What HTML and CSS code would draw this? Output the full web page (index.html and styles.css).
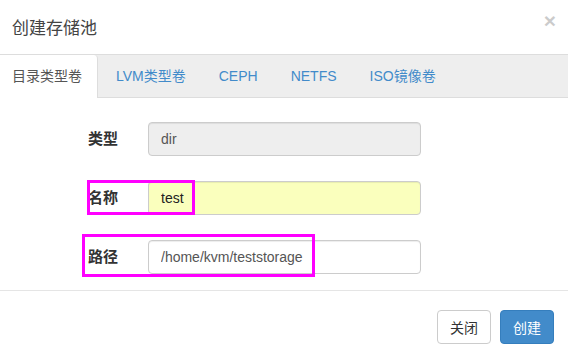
FILE: index.html
```html
<!DOCTYPE html>
<html lang="zh-CN">
<head>
    <meta charset="UTF-8">
    <title>创建存储池</title>
    <link rel="stylesheet" href="styles.css">
</head>
<body>
    <div class="modal">
        <div class="modal-header">
            <h4 class="modal-title">创建存储池</h4>
            <span class="close">&times;</span>
        </div>
        <ul class="nav-tabs">
            <li class="active"><a>目录类型卷</a></li>
            <li><a>LVM类型卷</a></li>
            <li><a>CEPH</a></li>
            <li><a>NETFS</a></li>
            <li><a>ISO镜像卷</a></li>
        </ul>
        <div class="modal-body">
            <div class="form-row">
                <label>类型</label>
                <input class="form-control" type="text" value="dir" disabled>
            </div>
            <div class="form-row">
                <label>名称</label>
                <input class="form-control filled" type="text" value="test">
                <span class="mark mark-name"></span>
            </div>
            <div class="form-row">
                <label>路径</label>
                <input class="form-control" type="text" value="/home/kvm/teststorage">
                <span class="mark mark-path"></span>
            </div>
        </div>
        <div class="modal-footer">
            <button class="btn btn-default">关闭</button>
            <button class="btn btn-primary">创建</button>
        </div>
    </div>
</body>
</html>
```

FILE: styles.css
```css
body, html {
    margin: 0;
    padding: 0;
    background: #fff;
    font-family: "Liberation Sans", Arial, "Noto Sans CJK SC", sans-serif;
    font-size: 14px;
    color: #333;
}

.modal {
    width: 568px;
    height: 361px;
    overflow: hidden;
}

.modal-header {
    display: flex;
    justify-content: space-between;
    align-items: center;
    height: 54px;
    padding: 0 12px 0 12px;
    box-sizing: border-box;
}

.modal-title {
    margin: 0;
    font-size: 17px;
    font-weight: normal;
    color: #444;
    position: relative;
    top: -1px;
}

.close {
    font-size: 21px;
    font-weight: bold;
    color: #000;
    opacity: 0.2;
    line-height: 1;
    position: relative;
    top: -7px;
}

.nav-tabs {
    list-style: none;
    margin: 0;
    padding: 0;
    display: flex;
    height: 42px;
    background: #eee;
    border-top: 1px solid #ddd;
    border-bottom: 1px solid #ddd;
}

.nav-tabs li {
    margin-right: 3px;
}

.nav-tabs li a {
    display: block;
    padding: 0 15px;
    line-height: 42px;
    color: #428bca;
    cursor: pointer;
}

.nav-tabs li:first-child a {
    padding-left: 12px;
}

.nav-tabs li.active {
    background: #fff;
    border-right: 1px solid #ddd;
    margin-bottom: -1px;
    height: 43px;
    border-top-right-radius: 4px;
}

.nav-tabs li.active a {
    color: #555;
}

.modal-body {
    padding: 24px 0 0 88px;
    height: 168px;
    border-bottom: 1px solid #e5e5e5;
}

.form-row {
    display: flex;
    align-items: center;
    position: relative;
    margin-bottom: 25px;
}

.form-row label {
    width: 60px;
    font-weight: bold;
    font-size: 15px;
    color: #333;
    position: relative;
    top: -2px;
}

.form-control {
    width: 273px;
    height: 34px;
    box-sizing: border-box;
    padding: 6px 12px;
    border: 1px solid #ccc;
    border-radius: 4px;
    font-family: inherit;
    font-size: 14px;
    color: #555;
    background: #fff;
    box-shadow: inset 0 1px 1px rgba(0, 0, 0, 0.075);
}

.form-control[disabled] {
    background: #eee;
}

.form-control.filled {
    background: #faffbd;
    color: #222;
}

.mark {
    position: absolute;
    border: 3px solid #f0f;
    box-sizing: border-box;
}

.mark-name {
    left: -1px;
    top: -1px;
    width: 108px;
    height: 35px;
}

.mark-path {
    left: -6px;
    top: -6px;
    width: 233px;
    height: 43px;
}

.modal-footer {
    display: flex;
    justify-content: flex-end;
    gap: 9px;
    padding: 19px 14px 0 0;
}

.btn {
    height: 34px;
    padding: 6px 12px;
    font-family: inherit;
    font-size: 14px;
    border-radius: 4px;
    border: 1px solid #ccc;
    cursor: pointer;
}

.btn-default {
    background: #fff;
    color: #333;
    width: 54px;
}

.btn-primary {
    background: #428bca;
    border-color: #357ebd;
    color: #fff;
    width: 54px;
}
```
